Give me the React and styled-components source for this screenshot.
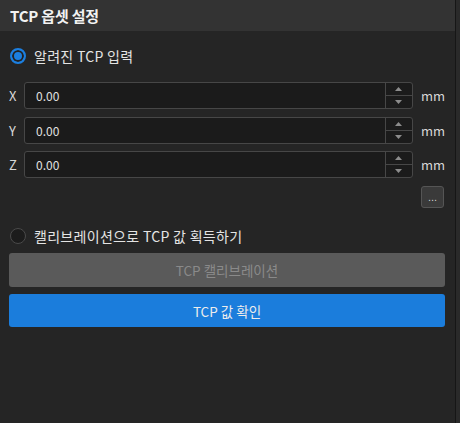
import React, { useState } from "react";
import styled, { createGlobalStyle } from "styled-components";

const GlobalStyle = createGlobalStyle`
  html, body {
    margin: 0;
    padding: 0;
    background: #2a2a2a;
  }
  body {
    font-family: "Noto Sans CJK KR", "Noto Sans", sans-serif;
  }
`

const Page = styled.div`
  display: flex;
  height: 423px;
  width: 460px;
`

const Panel = styled.div`
  width: 455px;
  height: 100%;
  background-color: #252525;
  border-right: 1px solid #161616;
  display: flex;
  flex-direction: column;
`

const Header = styled.div`
  height: 31px;
  background-color: #333333;
  display: flex;
  align-items: center;
  padding: 0 10px;
  color: #f2f2f2;
  font-size: 15px;
  font-weight: bold;
  letter-spacing: -0.2px;
`

const Body = styled.div`
  display: flex;
  flex-direction: column;
  padding: 12px 10px 0 9px;
`

const RadioRow = styled.label`
  display: flex;
  align-items: center;
  gap: 8px;
  height: 26px;
  color: #e4e4e4;
  font-size: 14px;
  letter-spacing: 0.3px;
  cursor: pointer;
`

const RadioDot = styled.span`
  box-sizing: border-box;
  width: 16px;
  height: 16px;
  border-radius: 50%;
  border: ${(p) => (p.checked ? "2px solid #1c7fe0" : "1.5px solid #4a4a4a")};
  background: ${(p) => (p.checked ? "#1c7fe0" : "#1c1c1c")};
  box-shadow: ${(p) => (p.checked ? "inset 0 0 0 2px #222" : "none")};
  margin-left: 1px;
`

const Fields = styled.div`
  display: flex;
  flex-direction: column;
  gap: 7.5px;
  margin-top: 13px;
`

const FieldRow = styled.div`
  display: flex;
  align-items: center;
  height: 27px;
`

const AxisLabel = styled.span`
  width: 15px;
  color: #d8d8d8;
  font-size: 13px;
`

const SpinBox = styled.div`
  box-sizing: border-box;
  display: flex;
  width: 389px;
  height: 27px;
  border: 1px solid #474747;
  border-radius: 3px;
  background-color: #1b1b1b;
  overflow: hidden;
`

const NumberInput = styled.input`
  flex: 1;
  min-width: 0;
  background: transparent;
  border: none;
  outline: none;
  color: #e0e0e0;
  font-family: "Noto Sans CJK KR", "Noto Sans", sans-serif;
  font-size: 12px;
  padding: 0 11px;
`

const Arrows = styled.div`
  width: 26px;
  display: flex;
  flex-direction: column;
  border-left: 1px solid #474747;
`

const ArrowButton = styled.div`
  flex: 1;
  display: flex;
  align-items: center;
  justify-content: center;
  & + & {
    border-top: 1px solid #474747;
  }
`

const Unit = styled.span`
  margin-left: 8px;
  color: #d8d8d8;
  font-size: 13px;
`

const MoreRow = styled.div`
  display: flex;
  justify-content: flex-end;
  margin-top: 8px;
  padding-right: 1px;
`

const MoreButton = styled.button`
  width: 23px;
  height: 22px;
  padding: 0 0 4px;
  border: 1px solid #555;
  border-radius: 3px;
  background-color: #3a3a3a;
  color: #d0d0d0;
  font-size: 11px;
  line-height: 1;
  display: flex;
  align-items: flex-end;
  justify-content: center;
  cursor: pointer;
`

const SecondRadio = styled.div`
  margin-top: 15px;
`

const Button = styled.button`
  box-sizing: border-box;
  width: 436px;
  height: ${(p) => (p.primary ? "33px" : "34px")};
  border: none;
  border-radius: 3px;
  margin-top: ${(p) => (p.primary ? "7px" : "4px")};
  background-color: ${(p) => (p.primary ? "#1b7ddc" : "#5a5a5a")};
  color: ${(p) => (p.primary ? "#ececec" : "#8a8a8a")};
  font-family: "Noto Sans CJK KR", "Noto Sans", sans-serif;
  font-size: 13.5px;
  cursor: ${(p) => (p.disabled ? "default" : "pointer")};
`

const Tri = ({ up }) => (
  <svg width="7" height="4" viewBox="0 0 7 4">
    <path d={up ? "M0 4 L3.5 0 L7 4 Z" : "M0 0 L3.5 4 L7 0 Z"} fill="#8c8c8c" />
  </svg>
);

const axes = ["X", "Y", "Z"];

const App = () => {
  const [mode, setMode] = useState("known");
  const [values, setValues] = useState({ X: "0.00", Y: "0.00", Z: "0.00" });

  return (
    <Page>
      <GlobalStyle />
      <Panel>
        <Header>TCP 옵셋 설정</Header>
        <Body>
          <RadioRow onClick={() => setMode("known")}>
            <RadioDot checked={mode === "known"} />
            알려진 TCP 입력
          </RadioRow>

          <Fields>
            {axes.map((a) => (
              <FieldRow key={a}>
                <AxisLabel>{a}</AxisLabel>
                <SpinBox>
                  <NumberInput
                    value={values[a]}
                    onChange={(e) => setValues({ ...values, [a]: e.target.value })}
                  />
                  <Arrows>
                    <ArrowButton><Tri up /></ArrowButton>
                    <ArrowButton><Tri /></ArrowButton>
                  </Arrows>
                </SpinBox>
                <Unit>mm</Unit>
              </FieldRow>
            ))}
          </Fields>

          <MoreRow>
            <MoreButton>...</MoreButton>
          </MoreRow>

          <SecondRadio>
            <RadioRow onClick={() => setMode("calib")}>
              <RadioDot checked={mode === "calib"} />
              캘리브레이션으로 TCP 값 획득하기
            </RadioRow>
          </SecondRadio>

          <Button disabled={mode !== "calib"}>TCP 캘리브레이션</Button>
          <Button primary>TCP 값 확인</Button>
        </Body>
      </Panel>
    </Page>
  );
};

export default App;
